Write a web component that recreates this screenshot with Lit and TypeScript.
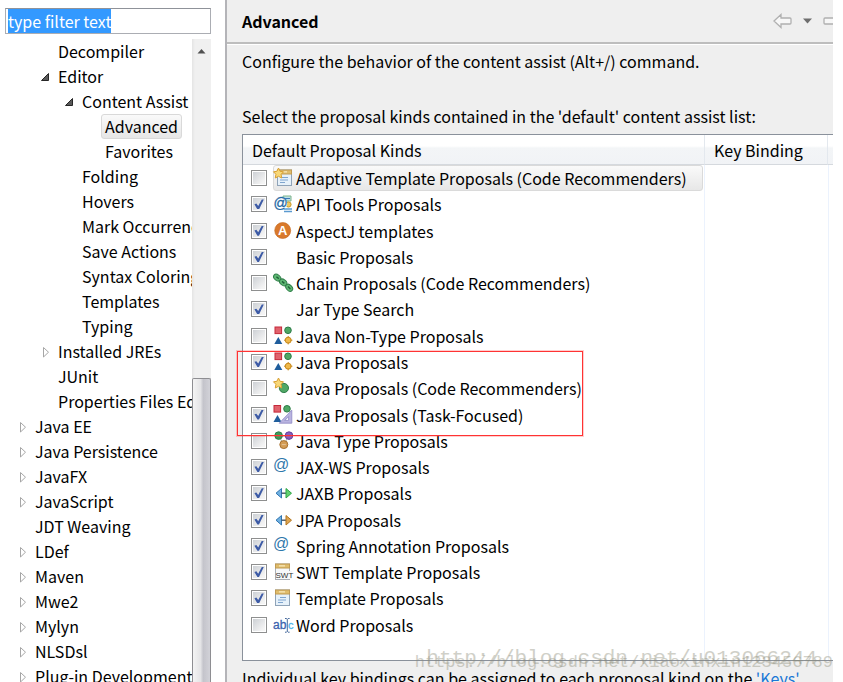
import { LitElement, html, css, svg, nothing } from "lit";
import { customElement, state } from "lit/decorators.js";
import { classMap } from "lit/directives/class-map.js";

const STAR = "0,-5 1.6,-1.7 5,-1.2 2.6,1.3 3.2,5 0,3.3 -3.2,5 -2.6,1.3 -5,-1.2 -1.6,-1.7";

const star = () => svg`<g transform="translate(4.5 4)"><polygon points=${STAR} fill="#f8d878" stroke="#d9a032" stroke-width="1"/></g>`;

const sheet = (x: number, w: number) => svg`
  <rect x=${x + 0.5} y="1" width=${w} height="15.5" fill="#e6f1fa" stroke="#8fa3b8"/>
  <rect x=${x + 0.5} y="1" width=${w} height="4" fill="#e0bd6c" stroke="#c09a52"/>
  <path d="M${x + 4} 2.9h6" stroke="#fff3cf" stroke-width="1"/>
  <path d="M${x + 5} 8.5h6M${x + 3} 11h8M${x + 3} 13.5h5" stroke="#7fa5cf" stroke-width="1.2"/>`;

const shapes = () => svg`
  <rect x="1" y="0" width="6.6" height="6.6" fill="#e0626c" stroke="#c5283a"/>
  <circle cx="14" cy="3.3" r="3.3" fill="#4fa765" stroke="#2d7c48"/>
  <polygon points="4.3,10 8.3,17 0.3,17" fill="#1f5d9c"/>
  <circle cx="14.2" cy="13.2" r="3" fill="#f0b94b" stroke="#c88a1e"/>
  <path d="M14.2 9v2M14.2 15.4v2M10 13.2h2M16.4 13.2h2" stroke="#c88a1e"/>`;

const arrows = (right: string, edge: string) => svg`
  <polygon points="7.5,4.5 7.5,14 2,9.2" fill="#6fb0e0" stroke="#2f74b0"/>
  <path d="M7.5 9.2h4.5" stroke="#456" stroke-width="1.4"/>
  <polygon points="12,4.5 12,14 17.5,9.2" fill=${right} stroke=${edge}/>`;

const at = () => svg`<text x="-1" y="12" font-family="Liberation Sans" font-size="16" fill="#2f77ab">@</text>`;

const ICONS: Record<string, () => unknown> = {
  adaptive: () => svg`${sheet(3, 14)}${star()}`,
  api: () => svg`
    <path d="M9 1h8v5h-8z" fill="#bfe0e6" stroke="#7fb48a"/>
    <path d="M11 3.5h5" stroke="#3c78b4"/>
    <circle cx="14.5" cy="9.5" r="2.6" fill="#f2c860" stroke="#c99a2c"/>
    <path d="M10 14h8M10 16.5h8" stroke="#5b9ad0" stroke-width="1.4"/>
    <circle cx="6.6" cy="8.5" r="6.6" fill="#fff"/>
    <text x="-0.5" y="13" font-family="Liberation Sans" font-size="14" fill="#2468a4" stroke="#2468a4" stroke-width="0.3">@</text>`,
  aspectj: () => svg`
    <circle cx="8.7" cy="8.5" r="8" fill="#d9792b" stroke="#c2661d" stroke-width="0.6"/>
    <text x="8.7" y="13" text-anchor="middle" font-family="Liberation Sans" font-weight="700" font-size="13" fill="#fff">A</text>`,
  chain: () => svg`
    <g fill="#5fb774" stroke="#2f7f48" stroke-width="1">
      <ellipse cx="3.2" cy="3.6" rx="4" ry="2.8" transform="rotate(38 3.2 3.6)"/>
      <ellipse cx="9.2" cy="8.4" rx="4" ry="2.8" transform="rotate(38 9.2 8.4)"/>
      <ellipse cx="15.2" cy="13.8" rx="4" ry="2.8" transform="rotate(46 15.2 13.8)"/>
    </g>
    <path d="M2.4 2.8l2.4 1.8M8 7.4l2.4 2M14 12.6l2.4 2.4" stroke="#1f6236" stroke-width="1.4"/>`,
  shapes,
  starred: () => svg`<circle cx="9.9" cy="9" r="4.6" fill="#4fa765" stroke="#2d7c48"/>${star()}`,
  task: () => svg`
    <rect x="0" y="-0.5" width="6.6" height="6.6" fill="#e0626c" stroke="#c5283a"/>
    <circle cx="13" cy="2.8" r="3.3" fill="#4fa765" stroke="#2d7c48"/>
    <polygon points="3.5,9 7.5,16 -0.5,16" fill="#1f5d9c"/>
    <path d="M17.8 4.2v13h-12.6zM14.6 10.6v3.8h-3.8z" fill="#b9b4e0" stroke="#8d88c4" fill-rule="evenodd" stroke-width="0.8"/>`,
  types: () => svg`
    <path d="M4.7 4l5 8.5 5.2-8.5z" fill="none" stroke="#9aa"/>
    <circle cx="4.6" cy="3.6" r="3.8" fill="#3f9a58" stroke="#2d7c48"/>
    <circle cx="15" cy="3.6" r="3.8" fill="#8560bd" stroke="#63409c"/>
    <circle cx="9.8" cy="12.6" r="4" fill="#d39c54" stroke="#a87130"/>
    <path d="M3 3.6h3.2M13.4 3.6h3.2M7.8 12.6h4" stroke="#fff" opacity=".4"/>`,
  at,
  jaxb: () => arrows("#62d070", "#2da545"),
  jpa: () => arrows("#dda552", "#b3761f"),
  swt: () => svg`
    <rect x="1.5" y="1" width="14" height="15.5" fill="#f6f8fa" stroke="#a9aeb4"/>
    <rect x="1.5" y="1" width="14" height="4" fill="#e0bd6c" stroke="#c09a52"/>
    <path d="M5 2.9h6" stroke="#fff3cf"/>
    <rect x="2" y="8" width="16" height="8" fill="#f6f8fa"/>
    <text x="1.5" y="15" font-family="Liberation Sans" font-size="8" fill="#333">SWT</text>`,
  template: () => sheet(1, 14),
  word: () => svg`
    <text x="-1" y="13" font-family="Liberation Sans" font-size="12" fill="#3a62ae" stroke="#3a62ae" stroke-width="0.3">ab</text>
    <path d="M11 2.5h1.5l.8.8.8-.8h1.5M13.3 3.3v12M11 16.2h1.5l.8-.8.8.8h1.5" fill="none" stroke="#44689c"/>
    <text x="14" y="13" font-family="Liberation Sans" font-size="11" fill="#4fb4e8" stroke="#4fb4e8" stroke-width="0.3">c</text>`,
};

interface TreeNode { label: string; level: number; open?: boolean; leaf?: boolean; selected?: boolean }

const TREE: TreeNode[] = [
  { label: "Decompiler", level: 2, leaf: true },
  { label: "Editor", level: 2, open: true },
  { label: "Content Assist", level: 3, open: true },
  { label: "Advanced", level: 4, leaf: true, selected: true },
  { label: "Favorites", level: 4, leaf: true },
  { label: "Folding", level: 3, leaf: true },
  { label: "Hovers", level: 3, leaf: true },
  { label: "Mark Occurrences", level: 3, leaf: true },
  { label: "Save Actions", level: 3, leaf: true },
  { label: "Syntax Coloring", level: 3, leaf: true },
  { label: "Templates", level: 3, leaf: true },
  { label: "Typing", level: 3, leaf: true },
  { label: "Installed JREs", level: 2 },
  { label: "JUnit", level: 2, leaf: true },
  { label: "Properties Files Editor", level: 2, leaf: true },
  { label: "Java EE", level: 1 },
  { label: "Java Persistence", level: 1 },
  { label: "JavaFX", level: 1 },
  { label: "JavaScript", level: 1 },
  { label: "JDT Weaving", level: 1, leaf: true },
  { label: "LDef", level: 1 },
  { label: "Maven", level: 1 },
  { label: "Mwe2", level: 1 },
  { label: "Mylyn", level: 1 },
  { label: "NLSDsl", level: 1 },
  { label: "Plug-in Development", level: 1 },
];

interface Kind { label: string; icon?: string; checked: boolean }

const KINDS: Kind[] = [
  { label: "Adaptive Template Proposals (Code Recommenders)", icon: "adaptive", checked: false },
  { label: "API Tools Proposals", icon: "api", checked: true },
  { label: "AspectJ templates", icon: "aspectj", checked: true },
  { label: "Basic Proposals", checked: true },
  { label: "Chain Proposals (Code Recommenders)", icon: "chain", checked: false },
  { label: "Jar Type Search", checked: true },
  { label: "Java Non-Type Proposals", icon: "shapes", checked: false },
  { label: "Java Proposals", icon: "shapes", checked: true },
  { label: "Java Proposals (Code Recommenders)", icon: "starred", checked: false },
  { label: "Java Proposals (Task-Focused)", icon: "task", checked: true },
  { label: "Java Type Proposals", icon: "types", checked: false },
  { label: "JAX-WS Proposals", icon: "at", checked: true },
  { label: "JAXB Proposals", icon: "jaxb", checked: true },
  { label: "JPA Proposals", icon: "jpa", checked: true },
  { label: "Spring Annotation Proposals", icon: "at", checked: true },
  { label: "SWT Template Proposals", icon: "swt", checked: true },
  { label: "Template Proposals", icon: "template", checked: true },
  { label: "Word Proposals", icon: "word", checked: false },
];

@customElement("preference-tree")
class PreferenceTree extends LitElement {
  static styles = css`
    :host { display: flex; flex-direction: column; gap: 5px; min-height: 0; padding: 8px 14px 0 5px; }
    .filter {
      flex: none; box-sizing: border-box; width: 100%; height: 26px; margin: 0; padding: 0 2px;
      border: 1px solid #abadb3; border-top-color: #8f9299; background: #fff;
      font: inherit; line-height: 22px; color: #000; outline: none; border-radius: 0;
    }
    .filter::selection { background: #3399ff; color: #fff; }
    .body { flex: 1; display: flex; min-height: 0; }
    .tree { flex: 1; min-width: 0; margin: 0; padding: 0; list-style: none; overflow: hidden; }
    .node { display: flex; align-items: center; height: 25px; white-space: nowrap; }
    .level-1 { padding-left: 10px; }
    .level-2 { padding-left: 33px; }
    .level-3 { padding-left: 57px; }
    .level-4 { padding-left: 80px; }
    .toggle, .blank { flex: none; width: 16px; height: 16px; margin: 0; padding: 0; border: 0; background: none; }
    .toggle svg { display: block; }
    .label { padding: 0 3px; border: 1px solid transparent; line-height: 23px; }
    .selected { border-color: #d9d9d9; border-radius: 3px; background: linear-gradient(#fafafa, #e6e6e6); }
    .scrollbar { flex: none; width: 19px; display: flex; flex-direction: column; background: linear-gradient(90deg, #e4e4e4, #f0f0f0 3px); }
    .up { display: flex; justify-content: center; height: 22px; width: 100%; padding: 9px 0 0; border: 0; background: none; }
    .trough { flex: 1; display: flex; flex-direction: column; justify-content: flex-end; }
    .thumb {
      height: 49%; box-sizing: border-box; border: 1px solid #8e8e92; border-bottom: 0; border-radius: 2px 2px 0 0;
      background: linear-gradient(90deg, #f4f4f4, #e4e4e6 45%, #c4c4cb 60%, #d2d2d8);
    }
  `;

  firstUpdated() {
    const box = this.renderRoot.querySelector<HTMLInputElement>(".filter");
    box?.focus();
    box?.select();
  }

  private marker(node: TreeNode) {
    if (node.leaf) return html`<span class="blank"></span>`;
    const shape = node.open
      ? svg`<polygon points="10.5,4.5 10.5,11.5 3.5,11.5" fill="#595959" stroke="#262626"/>`
      : svg`<polygon points="5.5,3.5 5.5,13 10.5,8.2" fill="#fff" stroke="#a6a6a6"/>`;
    return html`<button class="toggle" aria-label="Toggle ${node.label}">
      <svg width="16" height="16" viewBox="0 0 16 16">${shape}</svg></button>`;
  }

  render() {
    return html`
      <input class="filter" type="text" aria-label="Filter" value="type filter text" spellcheck="false" />
      <div class="body">
        <ul class="tree">
          ${TREE.map((n) => html`<li class="node level-${n.level}">
            ${this.marker(n)}<span class=${classMap({ label: true, selected: !!n.selected })}>${n.label}</span>
          </li>`)}
        </ul>
        <div class="scrollbar">
          <button class="up" aria-label="Scroll up">
            <svg width="9" height="7" viewBox="0 0 9 7"><path d="M4.5 1l4 4.5h-8z" fill="#505050"/></svg>
          </button>
          <div class="trough"><div class="thumb"></div></div>
        </div>
      </div>`;
  }
}

@customElement("proposal-table")
class ProposalTable extends LitElement {
  static styles = css`
    :host { display: block; position: relative; }
    .frame { border: 1px solid #8a919b; border-right: 0; background: #fff; padding-bottom: 22px;
      background-image: linear-gradient(#ebf2fd, #ebf2fd), linear-gradient(#ebf2fd, #ebf2fd);
      background-size: 1px 100%; background-repeat: no-repeat;
      background-position: right 128px top, right 4px top; }
    .kinds { width: 100%; height: 503px; border-collapse: separate; border-spacing: 0; table-layout: fixed; }
    .binding { width: 123px; }
    .rest { width: 5px; }
    th {
      height: 30px; box-sizing: border-box; padding: 0 9px; text-align: left; font-weight: 400; line-height: 28px;
      background: linear-gradient(#fff 38%, #f3f5f7 45%, #f1f3f6); border-bottom: 1px solid #d5d9de; border-right: 1px solid #e3e8ee;
    }
    th.rest { padding: 0; border-right: 0; }
    td { padding: 0; }
    .kind { display: flex; align-items: center; gap: 6px; padding-left: 8px; white-space: nowrap; }
    .tick {
      flex: none; appearance: none; box-sizing: border-box; width: 16px; height: 16px; margin: 0;
      border: 1px solid #8e8f8f; outline: 1px solid #fff; outline-offset: -2px;
      background: linear-gradient(135deg, #c9cdd2, #f4f4f4 80%); padding: 2px;
    }
    .tick:checked::before {
      content: ""; display: block; width: 10px; height: 10px; background: #3d5ba6;
      clip-path: polygon(4% 48%, 24% 42%, 42% 66%, 78% 0, 98% 0, 50% 100%, 34% 100%);
    }
    .item { display: flex; align-items: center; gap: 4px; box-sizing: border-box; height: 26px; line-height: 24px; border: 1px solid transparent; }
    .current { border-color: #dadada; border-radius: 3px; background: linear-gradient(#fafafa, #e7e7e7); width: 430px; }
    .icon { flex: none; width: 18px; height: 18px; overflow: visible; }
    .callout {
      position: absolute; left: -5px; top: 217px; width: 344px; height: 83px;
      border: 1px solid #ff3333; box-shadow: 0 0 0 1px #ff33333d; pointer-events: none;
    }
    .mark { position: absolute; font-family: "Liberation Mono", monospace; line-height: 24px; white-space: nowrap; color: #8c8c78; opacity: .4; pointer-events: none; }
    .mark-large { right: 16px; bottom: -10px; font-size: 21px; }
    .mark-small { right: 0; bottom: -14px; font-size: 17px; }
  `;

  @state() private kinds = KINDS;

  private flip(index: number) {
    this.kinds = this.kinds.map((k, i) => (i === index ? { ...k, checked: !k.checked } : k));
  }

  render() {
    return html`
      <div class="frame">
        <table class="kinds">
          <thead><tr><th>Default Proposal Kinds</th><th class="binding">Key Binding</th><th class="rest"></th></tr></thead>
          <tbody>
            ${this.kinds.map((k, i) => html`<tr>
              <td><label class="kind">
                <input class="tick" type="checkbox" .checked=${k.checked} @change=${() => this.flip(i)} />
                <span class=${classMap({ item: true, current: i === 0 })}>
                  <svg class="icon" viewBox="0 0 18 18">${k.icon ? ICONS[k.icon]() : nothing}</svg>${k.label}
                </span>
              </label></td><td></td><td></td>
            </tr>`)}
          </tbody>
        </table>
      </div>
      <div class="callout"></div>
      <div class="mark mark-large">http://blog.csdn.net/u013066244</div>
      <div class="mark mark-small">https://blog.csdn.net/xiaoxinxin123456789</div>`;
  }
}

@customElement("app-root")
class AppRoot extends LitElement {
  static styles = css`
    :host {
      display: grid; grid-template-columns: 225px minmax(0, 1fr); grid-template-rows: minmax(0, 1fr);
      box-sizing: border-box; height: 100vh; overflow: hidden;
      padding-right: 10px; background: #fff; color: #000;
      font: 16px/24px "Noto Sans CJK SC", "Open Sans", sans-serif;
    }
    .page { border-left: 2px solid #b4b4b8; background: #efefef; min-width: 0; overflow: hidden; }
    .bar { display: flex; align-items: center; height: 42px; padding-left: 15px; overflow: hidden; border-bottom: 2px solid #bdbdbd; box-shadow: 0 1px #fff; }
    .title { flex: 1; margin: 0; font-size: 16px; line-height: 42px; font-weight: 700; }
    .tool { display: flex; flex: none; margin: 0; padding: 0; border: 0; background: none; }
    .tools { display: flex; align-items: center; gap: 11px; margin-right: -9px; }
    .content { display: flex; flex-direction: column; padding: 5px 0 0 15px; }
    .text { margin: 0; white-space: nowrap; }
    .list { margin-top: 31px; }
    .table { margin: 6px 0 5px; }
    a { color: #1a78d6; text-decoration: none; }
  `;

  render() {
    return html`
      <preference-tree></preference-tree>
      <main class="page">
        <header class="bar">
          <h1 class="title">Advanced</h1>
          <div class="tools">
            <button class="tool" aria-label="Back">
              <svg width="19" height="16" viewBox="0 0 19 16"><path d="M1 8l7-6.5v3.5h9q1 0 1 1v4q0 1-1 1h-9v3.5z" fill="#f7f7f7" stroke="#b0b0b0" stroke-width="1.3"/></svg>
            </button>
            <button class="tool" aria-label="Back history">
              <svg width="9" height="6" viewBox="0 0 9 6"><path d="M0 0.5h9l-4.5 5z" fill="#6e6e6e"/></svg>
            </button>
            <button class="tool" aria-label="Forward">
              <svg width="19" height="16" viewBox="0 0 19 16"><path d="M18 8l-7-6.5v3.5h-9q-1 0-1 1v4q0 1 1 1h9v3.5z" fill="#f7f7f7" stroke="#b0b0b0" stroke-width="1.3"/></svg>
            </button>
          </div>
        </header>
        <div class="content">
          <p class="text">Configure the behavior of the content assist (Alt+/) command.</p>
          <p class="text list">Select the proposal kinds contained in the 'default' content assist list:</p>
          <proposal-table class="table"></proposal-table>
          <p class="text">Individual key bindings can be assigned to each proposal kind on the <a href="#keys">'Keys'</a></p>
        </div>
      </main>`;
  }
}
